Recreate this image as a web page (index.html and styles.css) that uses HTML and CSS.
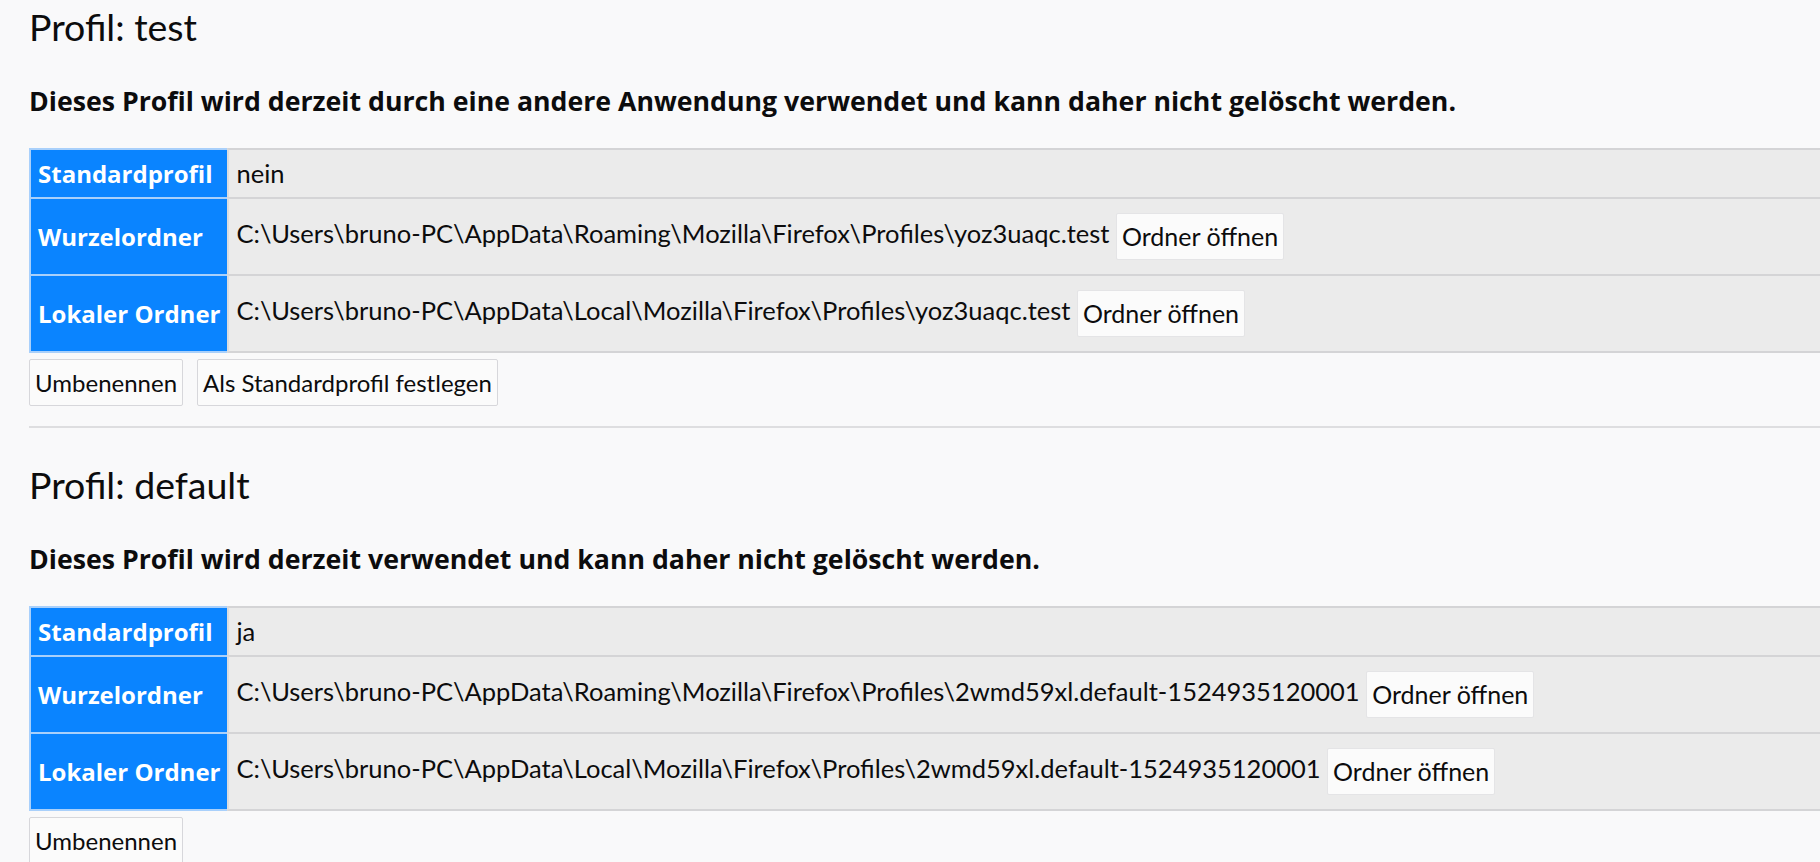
FILE: index.html
```html
<!DOCTYPE html>
<html lang="de">
<head>
  <meta charset="UTF-8">
  <meta name="viewport" content="width=device-width, initial-scale=1.0">
  <title>Profile</title>

  <link rel="stylesheet" href="styles.css">

</head>

<body>

  <main class="profiles">

    <!-- Profil: test -->
    <section class="profile">
      <h2>Profil: test</h2>
      <h3 class="notice">Dieses Profil wird derzeit durch eine andere Anwendung verwendet und kann daher nicht gelöscht werden.</h3>

      <table class="info">
        <tr>
          <th>Standardprofil</th>
          <td>nein</td>
        </tr>
        <tr>
          <th>Wurzelordner</th>
          <td>C:\Users\bruno-PC\AppData\Roaming\Mozilla\Firefox\Profiles\yoz3uaqc.test <button class="btn">Ordner öffnen</button></td>
        </tr>
        <tr>
          <th>Lokaler Ordner</th>
          <td>C:\Users\bruno-PC\AppData\Local\Mozilla\Firefox\Profiles\yoz3uaqc.test <button class="btn">Ordner öffnen</button></td>
        </tr>
      </table>

      <div class="actions">
        <button class="btn">Umbenennen</button>
        <button class="btn">Als Standardprofil festlegen</button>
      </div>
    </section>

    <hr>

    <!-- Profil: default -->
    <section class="profile">
      <h2>Profil: default</h2>
      <h3 class="notice">Dieses Profil wird derzeit verwendet und kann daher nicht gelöscht werden.</h3>

      <table class="info">
        <tr>
          <th>Standardprofil</th>
          <td>ja</td>
        </tr>
        <tr>
          <th>Wurzelordner</th>
          <td>C:\Users\bruno-PC\AppData\Roaming\Mozilla\Firefox\Profiles\2wmd59xl.default-1524935120001 <button class="btn">Ordner öffnen</button></td>
        </tr>
        <tr>
          <th>Lokaler Ordner</th>
          <td>C:\Users\bruno-PC\AppData\Local\Mozilla\Firefox\Profiles\2wmd59xl.default-1524935120001 <button class="btn">Ordner öffnen</button></td>
        </tr>
      </table>

      <div class="actions">
        <button class="btn">Umbenennen</button>
      </div>
    </section>

  </main>

</body>
</html>
```

FILE: styles.css
```css
* {
  box-sizing: border-box;
}

body {
  margin: 0;
  background-color: #f9f9fa;
  color: #0c0c0d;
  font-family: Lato, 'Open Sans', sans-serif;
  font-size: 25px;
  overflow-x: hidden;
}

.profiles {
  padding: 5px 0 0 29px;
}

h2 {
  margin: 0;
  font-size: 37.5px;
  line-height: 43px;
  font-weight: normal;
}

.notice {
  margin: 36px 0 30px;
  font-family: 'Open Sans', sans-serif;
  font-size: 26.7px;
  line-height: 34px;
  font-weight: bold;
}

.info {
  width: 100%;
  border-collapse: separate;
  border-spacing: 0;
}

.info th,
.info td {
  padding: 7px 7px;
  line-height: 33px;
  text-align: left;
  white-space: nowrap;
  border-top: 2px solid #d4d4d6;
}

.info th {
  width: 1%;
  background-color: #0a84ff;
  color: white;
  font-family: 'Open Sans', sans-serif;
  font-size: 24px;
  font-weight: bold;
  border-top-color: #a9d0fb;
  border-left: 2px solid #a9d0fb;
}

.info td {
  background-color: #ebebeb;
  border-left: 2px solid #dcdcde;
  font-size: 25.5px;
}

.info tr:last-child th {
  border-bottom: 2px solid #a9d0fb;
}

.info tr:last-child td {
  border-bottom: 2px solid #d4d4d6;
}

.btn {
  font-family: inherit;
  font-size: 25px;
  line-height: 33px;
  padding: 6px 5px;
  color: #0c0c0d;
  background-color: #fbfbfb;
  border: 1px solid #d7d7db;
  border-radius: 2px;
  vertical-align: middle;
}

.info .btn {
  margin: 7px 0;
  border-color: #e4e4e6;
}

.actions {
  display: flex;
  align-items: flex-start;
  gap: 14px;
  margin-top: 6px;
}

.actions .btn {
  font-size: 24px;
}

hr {
  margin: 20px 0 35px;
  border: none;
  border-top: 2px solid #dedee0;
}
```
